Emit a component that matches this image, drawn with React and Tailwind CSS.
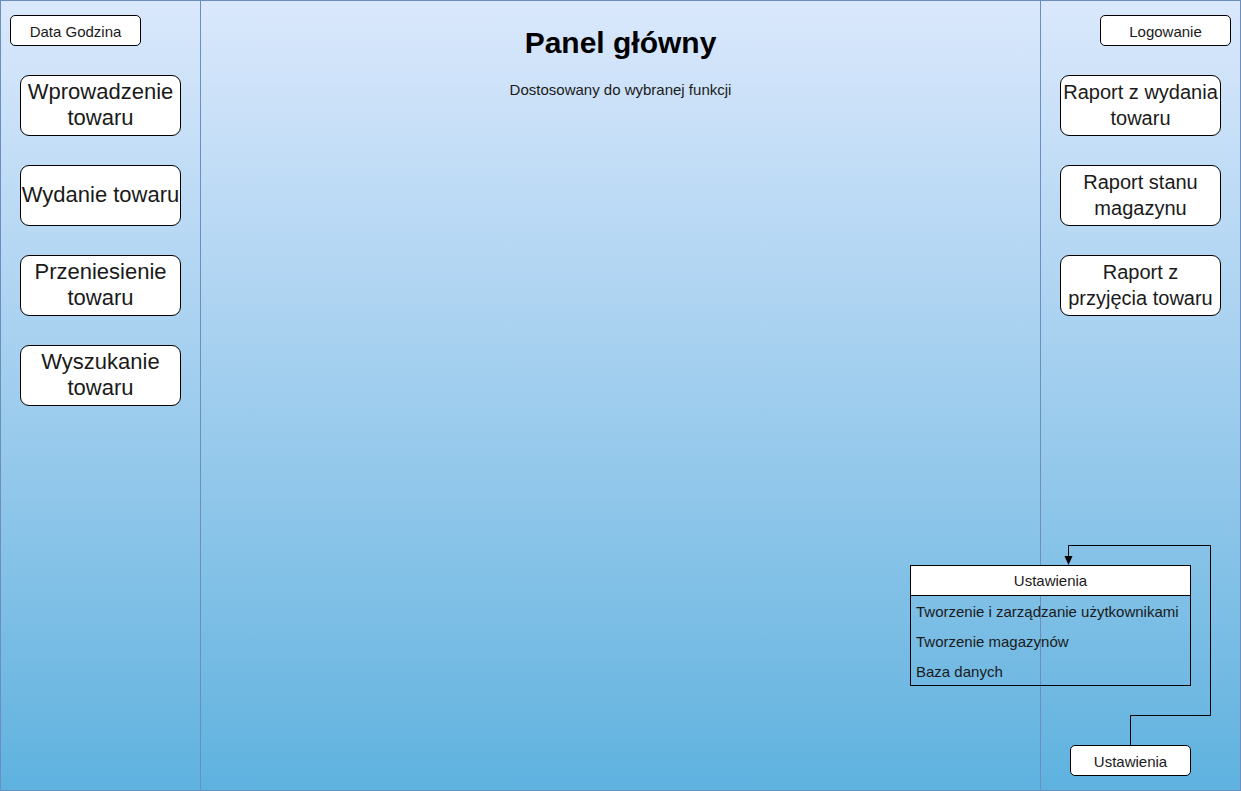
import React from "react";

const font = { fontFamily: '"Liberation Sans", Arial, Helvetica, sans-serif' };

function SmallBox({ children, className = "" }) {
  return (
    <div
      className={
        "h-[31px] bg-white border border-black rounded-[5px] flex items-center justify-center pt-[1px] text-[15px] leading-[17px] text-[#1a1a1a] whitespace-nowrap " +
        className
      }
    >
      {children}
    </div>
  );
}

function BigBox({ lines, size = "text-[22px]" }) {
  return (
    <div
      className={
        "w-[161px] h-[61px] bg-white border border-black rounded-[9px] flex flex-col items-center justify-center pb-[1px] leading-[26px] text-[#1a1a1a] whitespace-nowrap " +
        size
      }
    >
      {lines.map((l, i) => (
        <span key={i} className="block">
          {l}
        </span>
      ))}
    </div>
  );
}

export default function App() {
  return (
    <div
      style={font}
      className="relative w-[1241px] h-[791px] border border-[#6c8ebf] bg-linear-to-b from-[#dae8fc] to-[#5eb2df] flex overflow-hidden"
    >
      {/* Left column */}
      <div className="w-[200px] h-full border-r border-[#6c8ebf] flex flex-col pt-[14px]">
        <SmallBox className="ml-[9px] w-[131px]">Data Godzina</SmallBox>
        <div className="ml-[19px] mt-[29px] flex flex-col gap-[29px]">
          <BigBox lines={["Wprowadzenie", "towaru"]} />
          <BigBox lines={["Wydanie towaru"]} />
          <BigBox lines={["Przeniesienie", "towaru"]} />
          <BigBox lines={["Wyszukanie", "towaru"]} />
        </div>
      </div>

      {/* Middle column */}
      <div className="w-[840px] h-full border-r border-[#6c8ebf] flex flex-col items-center pt-[24px]">
        <div className="text-[30px] leading-[36px] font-bold text-black">Panel główny</div>
        <div className="mt-[20px] text-[15px] leading-[17px] text-[#1a1a1a]">
          Dostosowany do wybranej funkcji
        </div>
      </div>

      {/* Right column */}
      <div className="flex-1 h-full flex flex-col pt-[14px] pb-[14px]">
        <SmallBox className="ml-[59px] w-[131px]">Logowanie</SmallBox>
        <div className="ml-[19px] mt-[29px] flex flex-col gap-[29px]">
          <BigBox size="text-[20px]" lines={["Raport z wydania", "towaru"]} />
          <BigBox size="text-[20px]" lines={["Raport stanu", "magazynu"]} />
          <BigBox size="text-[20px]" lines={["Raport z", "przyjęcia towaru"]} />
        </div>
        <SmallBox className="ml-[29px] mt-auto w-[121px]">Ustawienia</SmallBox>
      </div>

      {/* Ustawienia list (diagram node) */}
      <div className="absolute left-[909px] top-[564px] w-[281px] h-[121px] border border-black flex flex-col text-[15px] leading-[17px] text-[#1a1a1a]">
        <div className="h-[30px] bg-white border-b border-black flex items-center justify-center pt-[1px]">
          Ustawienia
        </div>
        <div className="h-[30px] flex items-center pl-[5px] pt-[2px] whitespace-nowrap">
          Tworzenie i zarządzanie użytkownikami
        </div>
        <div className="h-[30px] flex items-center pl-[5px] pt-[2px]">Tworzenie magazynów</div>
        <div className="h-[30px] flex items-center pl-[5px] pt-[2px]">Baza danych</div>
      </div>

      {/* Connector */}
      <svg
        className="absolute left-[-1px] top-[-1px] pointer-events-none"
        width="1241"
        height="791"
        viewBox="0 0 1241 791"
      >
        <polyline
          points="1130.5,745 1130.5,715.5 1210.5,715.5 1210.5,545.5 1068.5,545.5 1068.5,557"
          fill="none"
          stroke="#000"
          strokeWidth="1"
        />
        <polygon points="1068.5,565 1064.5,556 1072.5,556" fill="#000" />
      </svg>
    </div>
  );
}
